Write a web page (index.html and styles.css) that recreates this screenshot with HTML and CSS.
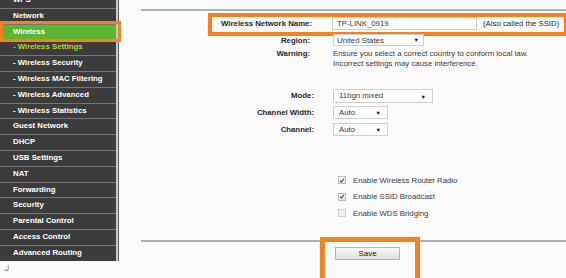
FILE: index.html
```html
<!DOCTYPE html>
<html lang="en">
<head>
    <meta charset="UTF-8">
    <meta name="viewport" content="width=device-width, initial-scale=1.0">
    <title>Wireless Settings</title>
    <link rel="stylesheet" href="styles.css">
</head>
<body>
    <div class="page">
        <aside class="sidebar">
            <ul class="menu">
                <li class="menu-item">WPS</li>
                <li class="menu-item">Network</li>
                <li class="menu-item active">Wireless</li>
                <li class="menu-item current">- Wireless Settings</li>
                <li class="menu-item">- Wireless Security</li>
                <li class="menu-item">- Wireless MAC Filtering</li>
                <li class="menu-item">- Wireless Advanced</li>
                <li class="menu-item">- Wireless Statistics</li>
                <li class="menu-item">Guest Network</li>
                <li class="menu-item">DHCP</li>
                <li class="menu-item">USB Settings</li>
                <li class="menu-item">NAT</li>
                <li class="menu-item">Forwarding</li>
                <li class="menu-item">Security</li>
                <li class="menu-item">Parental Control</li>
                <li class="menu-item">Access Control</li>
                <li class="menu-item">Advanced Routing</li>
            </ul>
            <span class="stray">ل</span>
        </aside>

        <main class="panel">
            <div class="form">
                <div class="row row-ssid">
                    <span class="label">Wireless Network Name:</span>
                    <div class="field">
                        <div class="input input-ssid">TP-LINK_0919</div>
                        <span class="hint">(Also called the SSID)</span>
                    </div>
                </div>

                <div class="row row-region">
                    <span class="label">Region:</span>
                    <div class="field">
                        <div class="select select-region">United States<span class="arrow">▼</span></div>
                    </div>
                </div>

                <div class="row row-warning">
                    <span class="label">Warning:</span>
                    <p class="warning-text">Ensure you select a correct country to conform local law.<br>Incorrect settings may cause interference.</p>
                </div>

                <div class="row row-mode">
                    <span class="label">Mode:</span>
                    <div class="field">
                        <div class="select select-mode">11bgn mixed<span class="arrow">▼</span></div>
                    </div>
                </div>

                <div class="row row-small">
                    <span class="label">Channel Width:</span>
                    <div class="field">
                        <div class="select select-short">Auto<span class="arrow">▼</span></div>
                    </div>
                </div>

                <div class="row row-small">
                    <span class="label">Channel:</span>
                    <div class="field">
                        <div class="select select-short">Auto<span class="arrow">▼</span></div>
                    </div>
                </div>

                <div class="checks">
                    <div class="check-row">
                        <span class="checkbox checked">
                            <svg viewBox="0 0 8 8" width="7" height="7"><path d="M1.5 4.2 L3.2 6 L6.6 1.6" fill="none" stroke="#333" stroke-width="1.4"/></svg>
                        </span>
                        <span class="check-label">Enable Wireless Router Radio</span>
                    </div>
                    <div class="check-row">
                        <span class="checkbox checked">
                            <svg viewBox="0 0 8 8" width="7" height="7"><path d="M1.5 4.2 L3.2 6 L6.6 1.6" fill="none" stroke="#333" stroke-width="1.4"/></svg>
                        </span>
                        <span class="check-label">Enable SSID Broadcast</span>
                    </div>
                    <div class="check-row">
                        <span class="checkbox"></span>
                        <span class="check-label">Enable WDS Bridging</span>
                    </div>
                </div>
            </div>

            <div class="actions">
                <div class="save-mark">
                    <button class="btn-save">Save</button>
                </div>
            </div>
        </main>
    </div>
</body>
</html>
```

FILE: styles.css
```css
:root {
    --mark-color: #f5811f;
    --menu-bg: #3c3c3c;
    --menu-line: #767676;
    --rule-color: #a3b7ae;
    --text-color: #2b2b2b;
}

* {
    margin: 0;
    padding: 0;
    box-sizing: border-box;
    font-family: 'Liberation Sans', Arial, sans-serif;
}

body {
    background: #fbfbfb;
    width: 566px;
    height: 278px;
    overflow: hidden;
    color: var(--text-color);
    font-size: 7.8px;
}

.page {
    display: flex;
    height: 100%;
}

/* Left menu */
.sidebar {
    width: 120px;
    flex-shrink: 0;
    display: flex;
    flex-direction: column;
}

.menu {
    list-style: none;
    width: 118px;
    margin-top: -8px;
    border-right: 2px solid #c9c9c9;
    box-shadow: 1px 0 0 #5c5c5c;
    background: var(--menu-bg);
}

.menu-item {
    position: relative;
    height: 15.8px;
    line-height: 14.8px;
    padding-left: 13px;
    border-top: 1px solid var(--menu-line);
    background: var(--menu-bg);
    color: #fff;
    font-weight: bold;
    white-space: nowrap;
}

.menu-item.active {
    background: #5cb531;
    z-index: 1;
}

.menu-item.active::after {
    content: '';
    position: absolute;
    top: -4px;
    bottom: -3px;
    left: 0;
    right: -5px;
    border: 3.5px solid var(--mark-color);
}

.menu-item.current {
    color: #b4d234;
}

.stray {
    margin: 3px 0 0 4px;
    font-size: 7px;
    color: #666;
    font-family: 'DejaVu Sans', sans-serif;
}

/* Main panel */
.panel {
    flex: 1;
    align-self: flex-start;
    margin: 9px 0 0 21px;
    border-top: 2px solid var(--rule-color);
}

.form {
    border-bottom: 2px solid var(--rule-color);
    padding-bottom: 18px;
}

.row {
    display: flex;
    align-items: center;
    gap: 19px;
}

.label {
    width: 173px;
    flex-shrink: 0;
    text-align: right;
    font-weight: bold;
    color: #262626;
}

.field {
    display: flex;
    align-items: center;
    gap: 6px;
}

.row-ssid {
    position: relative;
    margin-top: 6px;
    height: 13px;
}

.row-ssid .label {
    width: 171px;
    gap: 0;
}

.row-ssid::after {
    content: '';
    position: absolute;
    top: -4.5px;
    bottom: -5.5px;
    left: 67px;
    right: -2px;
    border: 4px solid var(--mark-color);
}

.input,
.select {
    position: relative;
    background: #fff;
    border: 1px solid #cfcfcf;
    color: #3a3a3a;
    white-space: nowrap;
}

.input-ssid {
    width: 145px;
    height: 13px;
    line-height: 11px;
    padding-left: 4px;
    margin-left: 1px;
}

.row-region {
    margin-top: 4px;
    height: 12px;
}

.row-region .label {
    width: 172px;
    padding-right: 3px;
}

.select {
    padding-left: 3px;
    line-height: 11px;
}

.select-region {
    width: 91px;
    height: 12px;
    margin-left: 1px;
}

.arrow {
    position: absolute;
    right: 4px;
    top: 0;
    font-size: 5.5px;
    color: #111;
}

.row-warning {
    margin-top: 3px;
    align-items: flex-start;
}

.row-warning .label {
    width: 172px;
    padding-right: 3px;
    line-height: 10px;
}

.warning-text {
    line-height: 10px;
    color: #3a3a3a;
    margin-left: 1px;
}

.row-mode {
    margin-top: 20px;
    height: 13.5px;
}

.row-small {
    margin-top: 3.3px;
    height: 13.5px;
}

.row-mode .select,
.row-small .select {
    height: 13.5px;
    line-height: 12px;
    padding-left: 5px;
}

.select-mode {
    width: 100px;
}

.select-short {
    width: 55px;
}

.row-mode .arrow,
.row-small .arrow {
    top: 0.5px;
    right: 6px;
}

/* Checkbox list */
.checks {
    margin: 36px 0 0 197px;
}

.check-row {
    display: flex;
    align-items: center;
    gap: 7px;
    height: 16.5px;
}

.checkbox {
    width: 8px;
    height: 8px;
    border: 1px solid #b9b9b9;
    background: linear-gradient(#fdfdfd, #e6e6e6);
    display: flex;
    align-items: center;
    justify-content: center;
}

.checkbox:not(.checked) {
    border-color: #d0d0d0;
    background: #f1f1f1;
}

.check-label {
    color: #3a3a3a;
}

/* Save */
.actions {
    padding: 5px 0 0 194px;
}

.save-mark {
    position: relative;
    width: 65px;
}

.save-mark::after {
    content: '';
    position: absolute;
    top: -10px;
    bottom: -30px;
    left: -15px;
    right: -20px;
    border: 5px solid var(--mark-color);
}

.btn-save {
    width: 65px;
    height: 13px;
    border: 1px solid #b3b3b3;
    background: linear-gradient(#f7f7f7, #dedede);
    font-size: 8px;
    color: #222;
    line-height: 11px;
}
```
